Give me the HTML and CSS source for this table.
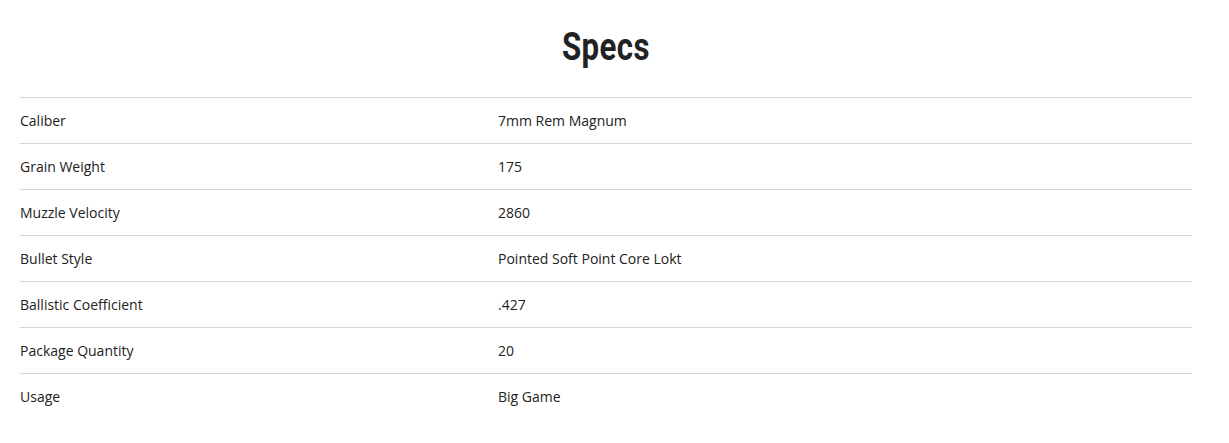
FILE: index.html
```html
<!DOCTYPE html>
<html>
<head>
<meta charset="utf-8">
<link rel="stylesheet" href="styles.css">
</head>
<body>
<section class="specs">
  <h2 class="specs-title"><span class="specs-title-text">Specs</span></h2>
  <div class="specs-table">
    <div class="row"><div class="label">Caliber</div><div class="value">7mm Rem Magnum</div></div>
    <div class="row"><div class="label">Grain Weight</div><div class="value">175</div></div>
    <div class="row"><div class="label">Muzzle Velocity</div><div class="value">2860</div></div>
    <div class="row"><div class="label">Bullet Style</div><div class="value">Pointed Soft Point Core Lokt</div></div>
    <div class="row"><div class="label">Ballistic Coefficient</div><div class="value">.427</div></div>
    <div class="row"><div class="label">Package Quantity</div><div class="value">20</div></div>
    <div class="row"><div class="label">Usage</div><div class="value">Big Game</div></div>
  </div>
</section>
</body>
</html>
```
FILE: styles.css
```css
html, body {
  margin: 0;
  padding: 0;
  background: #fff;
}
body {
  font-family: "Open Sans", "Liberation Sans", sans-serif;
  color: #222;
}
.specs {
  width: 1172px;
  margin-left: 20px;
  padding-top: 24px;
}
.specs-title {
  margin: 0;
  height: 73px;
  text-align: center;
  font-family: "Roboto", "Open Sans", sans-serif;
  font-weight: 700;
  font-size: 39px;
  line-height: 46px;
  color: #222;
}
.specs-title-text {
  display: inline-block;
  transform: scaleX(0.8);
  letter-spacing: 0.5px;
}
.specs-table {
  display: flex;
  flex-direction: column;
}
.row {
  display: grid;
  grid-template-columns: 478px 1fr;
  height: 45px;
  align-items: center;
  border-top: 1px solid #d6d6d6;
  font-size: 14px;
  line-height: 20px;
}
```
